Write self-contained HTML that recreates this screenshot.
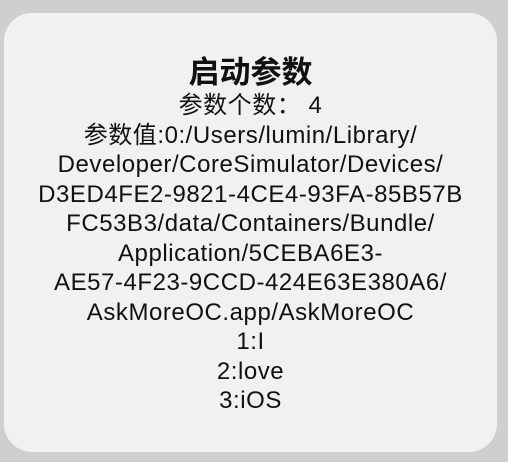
<!DOCTYPE html>
<html><head><meta charset="utf-8"><style>
html,body{margin:0;padding:0;width:508px;height:462px;background:#cfcfcf;overflow:hidden}
.card{position:absolute;left:4px;top:13px;width:493px;height:439px;background:#f1f1f1;border-radius:28px}
.t{position:absolute;left:0;width:493px;text-align:center;top:34px;font:bold 31px "Liberation Sans","Noto Sans CJK SC",sans-serif;color:#111}
.b{position:absolute;left:0;width:493px;text-align:center;top:78px;font:24px/29.5px "Liberation Sans","Noto Sans CJK SC",sans-serif;letter-spacing:0.55px;color:#111}
</style></head><body>
<div class="card">
<div class="t">启动参数</div>
<div class="b">参数个数： 4<br>参数值:0:/Users/lumin/Library/<br>Developer/CoreSimulator/Devices/<br>D3ED4FE2-9821-4CE4-93FA-85B57B<br>FC53B3/data/Containers/Bundle/<br>Application/5CEBA6E3-<br>AE57-4F23-9CCD-424E63E380A6/<br>AskMoreOC.app/AskMoreOC<br>1:I<br>2:love<br>3:iOS</div>
</div>
</body></html>
